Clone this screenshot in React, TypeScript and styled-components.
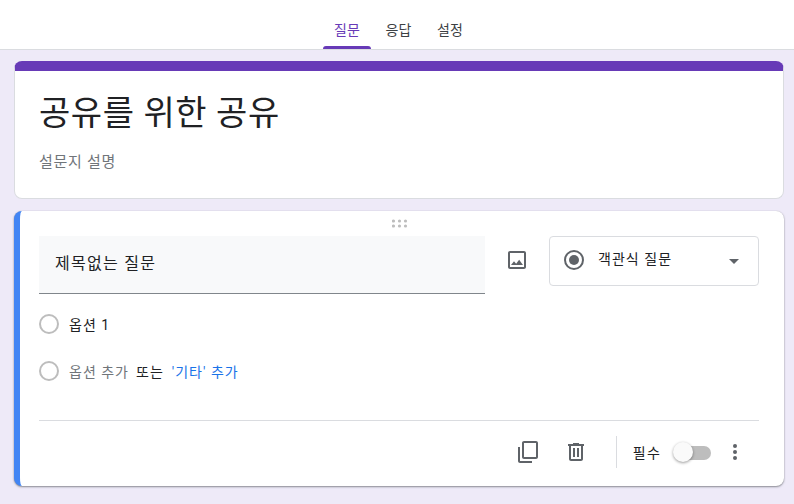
import React from "react";
import styled, { createGlobalStyle } from "styled-components";

const Global = createGlobalStyle`
  html, body { margin: 0; padding: 0; background: #eeeaf8; }
  body { font-family: Roboto, "Noto Sans CJK KR", sans-serif; height: 504px; overflow: hidden; }
  * { box-sizing: border-box; }
`;

const Page = styled.div`
  width: 794px;
  height: 504px;
  overflow: hidden;
  background: #eeeaf8;
`;

const TopBar = styled.header`
  height: 50px;
  background: #fff;
  border-bottom: 1px solid #dadce0;
  display: flex;
  justify-content: center;
  gap: 3.5px;
  padding-left: 3px;
`;

const Tab = styled.div<{ $active?: boolean }>`
  width: 48px;
  height: 49px;
  padding-top: 21px;
  text-align: center;
  font-size: 14px;
  line-height: 18px;
  letter-spacing: 0.2px;
  color: ${p => (p.$active ? "#673ab7" : "#3c4043")};
  position: relative;
  ${p =>
    p.$active &&
    `&::after {
      content: "";
      position: absolute;
      left: 0;
      right: 0;
      bottom: 0;
      height: 3px;
      background: #673ab7;
      border-radius: 3px 3px 0 0;
    }`}
`;

const Content = styled.main`
  padding: 11px 10px 0 14px;
  display: flex;
  flex-direction: column;
  gap: 12px;
`;

const TitleCard = styled.section`
  height: 138px;
  background: #fff;
  border: 1px solid #dadce0;
  border-top: 10px solid #673ab7;
  border-radius: 8px;
  padding: 19px 24px 0 24px;
`;

const Title = styled.h1`
  margin: 0;
  font-size: 34px;
  font-weight: 400;
  line-height: 46px;
  letter-spacing: 0.55px;
  color: #202124;
`;

const Description = styled.p`
  margin: 16px 0 0;
  font-size: 15px;
  line-height: 20px;
  letter-spacing: 0.7px;
  color: #70757a;
`;

const QuestionCard = styled.section`
  height: 275px;
  background: #fff;
  border-radius: 8px;
  border-left: 6px solid #4285f4;
  box-shadow: 0 1px 2px rgba(60, 64, 67, 0.55), 0 0 1px rgba(60, 64, 67, 0.25);
  padding: 25px 25px 0 19px;
  position: relative;
`;

const DragHandle = styled.svg`
  position: absolute;
  left: 372px;
  top: 8px;
`;

const QuestionRow = styled.div`
  display: flex;
  align-items: flex-start;
`;

const QuestionInput = styled.div`
  width: 446px;
  height: 58px;
  background: #f8f9fa;
  border-bottom: 1px solid #80868b;
  padding: 0 16px;
  font-size: 16px;
  line-height: 56px;
  letter-spacing: 1.3px;
  color: #202124;
`;

const ImageButton = styled.div`
  width: 64px;
  height: 48px;
  display: flex;
  align-items: center;
  justify-content: center;
`;

const TypeSelect = styled.div`
  width: 210px;
  height: 50px;
  border: 1px solid #dadce0;
  border-radius: 4px;
  display: flex;
  align-items: center;
  padding: 0 19px 2px 14px;
  font-size: 14px;
  letter-spacing: 1.05px;
  color: #202124;
`;

const SelectLabel = styled.span`
  margin-left: 14px;
  flex: 1;
  position: relative;
  top: -2px;
`;

const Caret = styled.svg`
  margin-top: 2px;
`;

const OptionRow = styled.div<{ $gap: number }>`
  display: flex;
  align-items: center;
  height: 24px;
  margin-top: ${p => p.$gap}px;
  font-size: 14px;
  letter-spacing: 1px;
`;

const RadioCircle = styled.span`
  width: 20px;
  height: 20px;
  border: 2px solid #bdbdbd;
  border-radius: 50%;
  margin-right: 10px;
`;

const OptionText = styled.span<{ $tone: string; $left?: number }>`
  color: ${p => p.$tone};
  margin-left: ${p => p.$left ?? 0}px;
`;

const Divider = styled.div`
  height: 1px;
  background: #dadce0;
  margin-top: 37px;
`;

const Footer = styled.div`
  display: flex;
  align-items: center;
  justify-content: flex-end;
  height: 48px;
  margin-top: 7px;
`;

const IconSlot = styled.div<{ $width: number }>`
  width: ${p => p.$width}px;
  display: flex;
  justify-content: center;
  align-items: center;
`;

const VRule = styled.div`
  width: 1px;
  height: 32px;
  background: #dadce0;
  margin: 0 16px;
`;

const RequiredLabel = styled.span`
  font-size: 14px;
  letter-spacing: 1.2px;
  color: #202124;
  margin-right: 14px;
`;

const Switch = styled.div`
  width: 36px;
  height: 14px;
  margin-top: 2px;
  border-radius: 7px;
  background: #bdbdbd;
  position: relative;
`;

const SwitchKnob = styled.span`
  position: absolute;
  left: -2px;
  top: -4px;
  width: 20px;
  height: 20px;
  border-radius: 50%;
  background: #fafafa;
  box-shadow: 0 1px 3px rgba(0, 0, 0, 0.4);
`;

const GRAY = "#5f6368";

export default function App() {
  return (
    <Page>
      <Global />
      <TopBar>
        <Tab $active>질문</Tab>
        <Tab>응답</Tab>
        <Tab>설정</Tab>
      </TopBar>
      <Content>
        <TitleCard>
          <Title>공유를 위한 공유</Title>
          <Description>설문지 설명</Description>
        </TitleCard>
        <QuestionCard>
          <DragHandle width="16" height="10" viewBox="0 0 16 10" fill="#bdbdbd">
            {[1.5, 7.5, 13.5].flatMap(x =>
              [2, 7].map(y => <circle key={`${x}-${y}`} cx={x} cy={y} r="1.6" />)
            )}
          </DragHandle>
          <QuestionRow>
            <QuestionInput>제목없는 질문</QuestionInput>
            <ImageButton>
              <svg width="24" height="24" viewBox="0 0 24 24" fill={GRAY}>
                <path d="M19 5v14H5V5h14m0-2H5c-1.1 0-2 .9-2 2v14c0 1.1.9 2 2 2h14c1.1 0 2-.9 2-2V5c0-1.1-.9-2-2-2z" />
                <path d="M14.14 11.86l-3 3.87L9 13.14 6 17h12z" />
              </svg>
            </ImageButton>
            <TypeSelect>
              <svg width="20" height="20" viewBox="0 0 20 20">
                <circle cx="10" cy="10" r="9" fill="none" stroke={GRAY} strokeWidth="2" />
                <circle cx="10" cy="10" r="5" fill={GRAY} />
              </svg>
              <SelectLabel>객관식 질문</SelectLabel>
              <Caret width="10" height="5" viewBox="0 0 10 5" fill={GRAY}>
                <path d="M0 0h10L5 5z" />
              </Caret>
            </TypeSelect>
          </QuestionRow>
          <OptionRow $gap={18}>
            <RadioCircle />
            <OptionText $tone="#202124">옵션 1</OptionText>
          </OptionRow>
          <OptionRow $gap={23}>
            <RadioCircle />
            <OptionText $tone="#70757a">옵션 추가</OptionText>
            <OptionText $tone="#202124" $left={7}>또는</OptionText>
            <OptionText $tone="#1a73e8" $left={8}>'기타' 추가</OptionText>
          </OptionRow>
          <Divider />
          <Footer>
            <IconSlot $width={48}>
              <svg width="24" height="24" viewBox="0 0 24 24" fill={GRAY}>
                <path d="M16 23H4c-1.1 0-2-.9-2-2V7h2v14h12v2zM20 1H8c-1.1 0-2 .9-2 2v14c0 1.1.9 2 2 2h12c1.1 0 2-.9 2-2V3c0-1.1-.9-2-2-2zm0 16H8V3h12v14z" />
              </svg>
            </IconSlot>
            <IconSlot $width={48}>
              <svg width="24" height="24" viewBox="0 0 24 24" fill={GRAY}>
                <path d="M15 4V3H9v1H4v2h1v13c0 1.1.9 2 2 2h10c1.1 0 2-.9 2-2V6h1V4h-5zm2 15H7V6h10v13zM9 8h2v9H9zm4 0h2v9h-2z" />
              </svg>
            </IconSlot>
            <VRule />
            <RequiredLabel>필수</RequiredLabel>
            <Switch>
              <SwitchKnob />
            </Switch>
            <IconSlot $width={48}>
              <svg width="24" height="24" viewBox="0 0 24 24" fill={GRAY}>
                <circle cx="12" cy="6" r="2" />
                <circle cx="12" cy="12" r="2" />
                <circle cx="12" cy="18" r="2" />
              </svg>
            </IconSlot>
          </Footer>
        </QuestionCard>
      </Content>
    </Page>
  );
}
